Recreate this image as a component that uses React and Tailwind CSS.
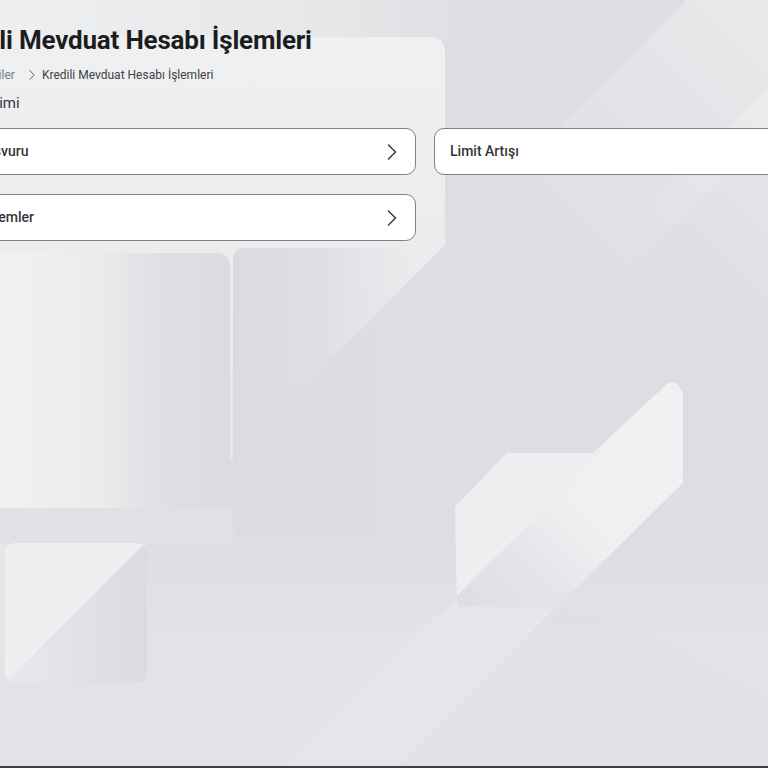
import React from 'react'

function Chevron({ className = '' }) {
  return (
    <svg viewBox="0 0 10 16" className={className} fill="none" stroke="currentColor" strokeWidth="1.5" strokeLinecap="round" strokeLinejoin="round">
      <polyline points="1.5,1 8.5,8 1.5,15" />
    </svg>
  )
}

// decorative background art, drawn once behind the page
function Backdrop() {
  return (
    <svg className="absolute inset-0 w-full h-full" viewBox="0 0 768 768" preserveAspectRatio="none">
      <defs>
        <linearGradient id="top" gradientUnits="userSpaceOnUse" x1="0" y1="0" x2="560" y2="0">
          <stop offset="0" stopColor="#eeeff1" stopOpacity="1" />
          <stop offset="0.6" stopColor="#e6e7e9" stopOpacity="1" />
          <stop offset="1" stopColor="#dcdee1" stopOpacity="0" />
        </linearGradient>
        <linearGradient id="bandA" gradientUnits="userSpaceOnUse" x1="768" y1="0" x2="480" y2="288">
          <stop offset="0" stopColor="#e9eaec" stopOpacity="1" />
          <stop offset="1" stopColor="#e2e3e6" stopOpacity="0" />
        </linearGradient>
        <linearGradient id="bandB" gradientUnits="userSpaceOnUse" x1="800" y1="0" x2="600" y2="200">
          <stop offset="0" stopColor="#eff0f2" stopOpacity="1" />
          <stop offset="1" stopColor="#e9eaec" stopOpacity="0" />
        </linearGradient>
        <linearGradient id="low" gradientUnits="userSpaceOnUse" x1="0" y1="540" x2="0" y2="640">
          <stop offset="0" stopColor="#e2e3e6" stopOpacity="0" />
          <stop offset="1" stopColor="#e2e3e6" stopOpacity="1" />
        </linearGradient>
        <linearGradient id="p1" x1="0" y1="0" x2="0" y2="1">
          <stop offset="0" stopColor="#eff0f2" />
          <stop offset="0.5" stopColor="#e9eaec" />
          <stop offset="1" stopColor="#e3e4e7" />
        </linearGradient>
        <linearGradient id="r1" x1="0" y1="0" x2="1" y2="0">
          <stop offset="0" stopColor="#f0f1f3" />
          <stop offset="0.45" stopColor="#ebeced" />
          <stop offset="0.7" stopColor="#dfe0e3" />
          <stop offset="1" stopColor="#dadce0" />
        </linearGradient>
        <linearGradient id="r2" gradientUnits="userSpaceOnUse" x1="233" y1="0" x2="420" y2="0">
          <stop offset="0" stopColor="#d9dbdf" stopOpacity="1" />
          <stop offset="0.45" stopColor="#dadce0" stopOpacity="0.8" />
          <stop offset="1" stopColor="#dcdee1" stopOpacity="0" />
        </linearGradient>
        <linearGradient id="r3" x1="0" y1="0" x2="1" y2="0">
          <stop offset="0" stopColor="#e8e9ec" />
          <stop offset="0.5" stopColor="#e1e2e5" />
          <stop offset="1" stopColor="#d9dbdf" />
        </linearGradient>
        <linearGradient id="s1" gradientUnits="userSpaceOnUse" x1="500" y1="650" x2="690" y2="460">
          <stop offset="0" stopColor="#dcdee1" />
          <stop offset="0.3" stopColor="#e4e5e8" />
          <stop offset="0.55" stopColor="#eeeff1" />
          <stop offset="1" stopColor="#f0f1f3" />
        </linearGradient>
        <clipPath id="c3">
          <rect x="5" y="543" width="142" height="140" rx="10" />
        </clipPath>
        <clipPath id="cs">
          <polygon points="455,507 507,453 593,453 668,383 676,383 683,392 683,483 557,607 457,607" />
        </clipPath>
      </defs>

      <rect x="0" y="0" width="768" height="768" fill="#dcdee1" />
      <rect x="0" y="0" width="560" height="40" fill="url(#top)" />
      <polygon points="687,0 900,0 400,500 187,500" fill="url(#bandA)" />
      <polygon points="856,0 1100,0 600,500 356,500" fill="url(#bandB)" />
      <polygon points="0,540 768,540 768,768 0,768" fill="url(#low)" />
      <polygon points="285,768 396,768 557,607 460,593" fill="#e5e6e9" />
      <polygon points="396,768 768,768 768,700 620,620 557,607" fill="#dfe0e3" opacity="0.6" />

      <path d="M -10 37 H 430 Q 445 37 445 52 V 245 L 0 690 L -10 690 Z" fill="url(#p1)" />
      <polygon points="-10,690 0,690 0,768 -10,768" fill="#e3e4e7" />

      <rect x="233" y="248" width="187" height="289" rx="10" fill="url(#r2)" />
      <rect x="-12" y="253" width="242" height="255" rx="12" fill="url(#r1)" />
      <rect x="-12" y="508" width="244" height="36" fill="#e0e1e4" />

      <g clipPath="url(#c3)">
        <rect x="5" y="543" width="142" height="140" fill="url(#r3)" />
        <polygon points="5,543 145,543 5,683" fill="#eeeff1" />
      </g>

      <g clipPath="url(#cs)">
        <rect x="440" y="370" width="260" height="250" fill="url(#s1)" />
        <polygon points="440,370 600,370 600,453 455,598 440,598" fill="#edeef0" />
      </g>
    </svg>
  )
}

function Card({ label, arrow = true }) {
  return (
    <div className="flex items-center justify-between h-[47px] rounded-[10px] border border-[#7f8184] bg-white pl-[15px] pr-[18px]">
      <span className="text-[14px] font-medium text-[#333538]">{label}</span>
      {arrow && <Chevron className="w-[10px] h-[16px] text-[#3a3c3f]" />}
    </div>
  )
}

export default function App() {
  return (
    <div className="relative w-[768px] h-[768px] overflow-hidden flex flex-col" style={{ fontFamily: 'Roboto, "Liberation Sans", sans-serif' }}>
      <Backdrop />
      <div className="relative flex-1 -ml-[69px] w-[988px] pt-[24px]">
        <h1 className="pl-[8px] text-[26px] leading-[32px] font-bold tracking-[-0.2px] text-[#1c1d1f]">
          Kredili Mevduat Hesabı İşlemleri
        </h1>
        <nav className="mt-[10px] flex items-center h-[18px] text-[12px] pl-[43px]">
          <span className="text-[#7a7c80]">Krediler</span>
          <Chevron className="w-[8px] h-[10px] ml-[13px] mr-[6px] text-[#55575a]" />
          <span className="text-[#404245]">Kredili Mevduat Hesabı İşlemleri</span>
        </nav>
        <div className="mt-[9px] -ml-[7px] text-[15px] leading-[20px] text-[#333538]">KMH Yönetimi</div>
        <div className="mt-[15px] grid grid-cols-2 gap-x-[18px] gap-y-[19px]">
          <Card label="Yeni Başvuru" />
          <Card label="Limit Artışı" arrow={false} />
          <Card label="Diğer İşlemler" />
        </div>
      </div>
      <div className="relative h-[2px] bg-[#3d4044]" />
    </div>
  )
}
